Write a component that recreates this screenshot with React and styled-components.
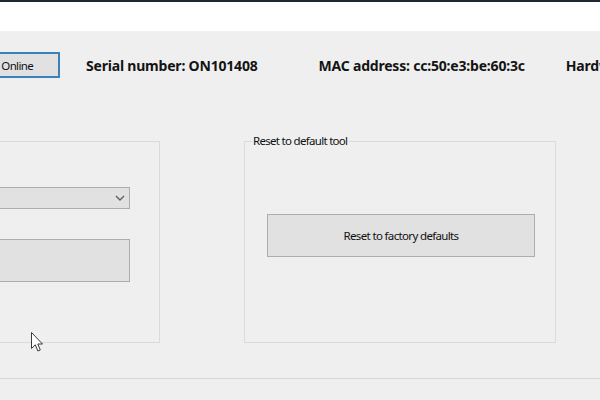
import React from "react";
import styled, { createGlobalStyle } from "styled-components";

const GlobalStyle = createGlobalStyle`
  html, body { margin: 0; padding: 0; overflow: hidden; }
  body { font-family: "Noto Sans", "Open Sans", sans-serif; }
`;

const Frame = styled.div`
  position: relative;
  width: 600px;
  height: 400px;
  overflow: hidden;
  background: #efefef;
  display: flex;
  flex-direction: column;
`;

const TopEdge = styled.div`
  height: 2px;
  background: #1d2935;
  flex: none;
`;

const WhiteBand = styled.div`
  height: 29px;
  background: #ffffff;
  flex: none;
`;

const Toolbar = styled.div`
  display: flex;
  align-items: center;
  height: 26px;
  margin-top: 21px;
  flex: none;
  white-space: nowrap;
`;

const WinButton = styled.button`
  box-sizing: border-box;
  flex: none;
  margin: 0;
  margin-left: ${(p) => p.$ml || 0}px;
  margin-top: ${(p) => p.$mt || 0}px;
  width: ${(p) => p.$w}px;
  height: ${(p) => p.$h}px;
  background: #e1e1e1;
  border: ${(p) => (p.$focused ? "2px solid #3b82bd" : "1px solid #adadad")};
  border-radius: 0;
  padding: 0;
  font-family: "Noto Sans", sans-serif;
  font-size: 11.5px;
  letter-spacing: -0.65px;
  color: #111;
  text-align: center;
  white-space: nowrap;
  overflow: hidden;
`;

const InfoLabel = styled.span`
  flex: none;
  margin-left: ${(p) => p.$ml}px;
  font-family: "Noto Sans", sans-serif;
  font-weight: 700;
  font-size: 14px;
  color: #141414;
  letter-spacing: -0.2px;
`;

const GroupsRow = styled.div`
  display: flex;
  align-items: flex-start;
  margin-top: 63px;
  flex: none;
`;

const GroupBox = styled.div`
  position: relative;
  box-sizing: border-box;
  flex: none;
  margin-left: ${(p) => p.$ml}px;
  width: ${(p) => p.$w}px;
  height: 202px;
  border: 1px solid #dadada;
  padding: ${(p) => p.$pad};
  display: flex;
  flex-direction: column;
  align-items: ${(p) => p.$align || "stretch"};
`;

const Legend = styled.span`
  position: absolute;
  top: -8px;
  left: 7px;
  padding: 0 2px 0 1px;
  background: #efefef;
  font-family: "Noto Sans", sans-serif;
  font-size: 11.5px;
  letter-spacing: -0.7px;
  color: #111;
  line-height: 14px;
`;

const ComboBox = styled.div`
  box-sizing: border-box;
  height: 22px;
  background: #e1e1e1;
  border: 1px solid #adadad;
  display: flex;
  align-items: center;
  justify-content: flex-end;
  padding-right: 4px;
`;

const Separator = styled.div`
  flex: none;
  margin-top: 35px;
  height: 1px;
  background: #d6d6d6;
`;

const Cursor = styled.svg`
  position: absolute;
  left: 31px;
  top: 332px;
`;

export default function App() {
  return (
    <>
      <GlobalStyle />
      <Frame>
        <TopEdge />
        <WhiteBand />
        <Toolbar>
          <WinButton $focused $ml={-42} $w={102} $h={26}>
            Go Online
          </WinButton>
          <InfoLabel $ml={26}>Serial number: ON101408</InfoLabel>
          <InfoLabel $ml={61}>MAC address: cc:50:e3:be:60:3c</InfoLabel>
          <InfoLabel $ml={41}>Hardware version: 2.0</InfoLabel>
        </Toolbar>
        <GroupsRow>
          <GroupBox $ml={-152} $w={312} $pad="45px 29px 0 23px">
            <ComboBox>
              <svg width="10" height="6" viewBox="0 0 10 6">
                <path d="M1 1 L5 5 L9 1" fill="none" stroke="#606060" strokeWidth="1.4" />
              </svg>
            </ComboBox>
            <WinButton $w={258} $h={43} $mt={30} />
          </GroupBox>
          <GroupBox $ml={84} $w={312} $pad="72px 0 0 22px">
            <Legend>Reset to default tool</Legend>
            <WinButton $w={268} $h={43}>Reset to factory defaults</WinButton>
          </GroupBox>
        </GroupsRow>
        <Separator />
        <Cursor width="13" height="21" viewBox="0 0 13 21">
          <path
            d="M0.5 0.5 L0.5 16.5 L4.3 12.8 L6.9 19 L9.3 18 L6.8 12 L11.5 12 Z"
            fill="#ffffff"
            stroke="#3a3a3a"
            strokeWidth="1"
            strokeLinejoin="round"
          />
        </Cursor>
      </Frame>
    </>
  );
}
